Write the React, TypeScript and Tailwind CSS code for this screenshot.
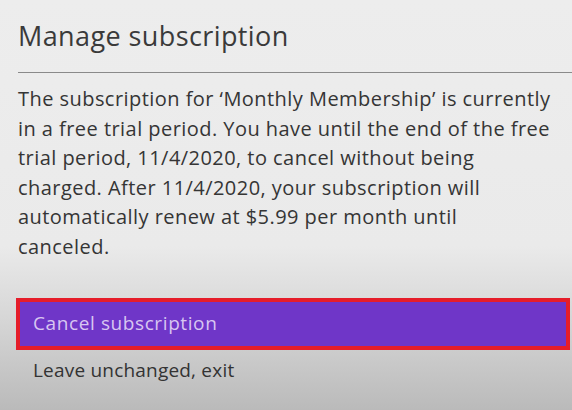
const lines = [
  "The subscription for \u2018Monthly Membership\u2019 is currently",
  "in a free trial period. You have until the end of the free",
  "trial period, 11/4/2020, to cancel without being",
  "charged. After 11/4/2020, your subscription will",
  "automatically renew at $5.99 per month until",
  "canceled.",
];

export default function App() {
  return (
    <div className="h-[410px] w-[572px] overflow-hidden bg-[linear-gradient(to_bottom,#ededed_0%,#eaeaea_60%,#d6d6d6_78%,#bababa_100%)] pl-[18px] font-['Open_Sans','Liberation_Sans',sans-serif]">
      <h1 className="pt-[17px] text-[27px] leading-[38px] font-normal tracking-[0.4px] text-[#3a3a3a]">
        Manage subscription
      </h1>
      <div className="mt-[17px] h-px bg-[#8a8a8a]" />
      <p className="mt-[11px] text-[20px] leading-[29.6px] tracking-[0.45px] text-[#353535]">
        {lines.map((l) => (
          <span key={l} className="block whitespace-nowrap">
            {l}
          </span>
        ))}
      </p>
      <div className="mt-[36px] mr-[2px] ml-[-2px] flex h-[52px] items-center border-[4px] border-[#e51d2a] bg-[#6f36c8] pl-[13px]">
        <span className="text-[19px] font-medium tracking-[0.6px] text-[#d8c6f1]">
          Cancel subscription
        </span>
      </div>
      <div className="mt-[6px] pl-[15px] text-[19px] leading-[28px] tracking-[0.2px] text-[#333333]">
        Leave unchanged, exit
      </div>
    </div>
  );
}
